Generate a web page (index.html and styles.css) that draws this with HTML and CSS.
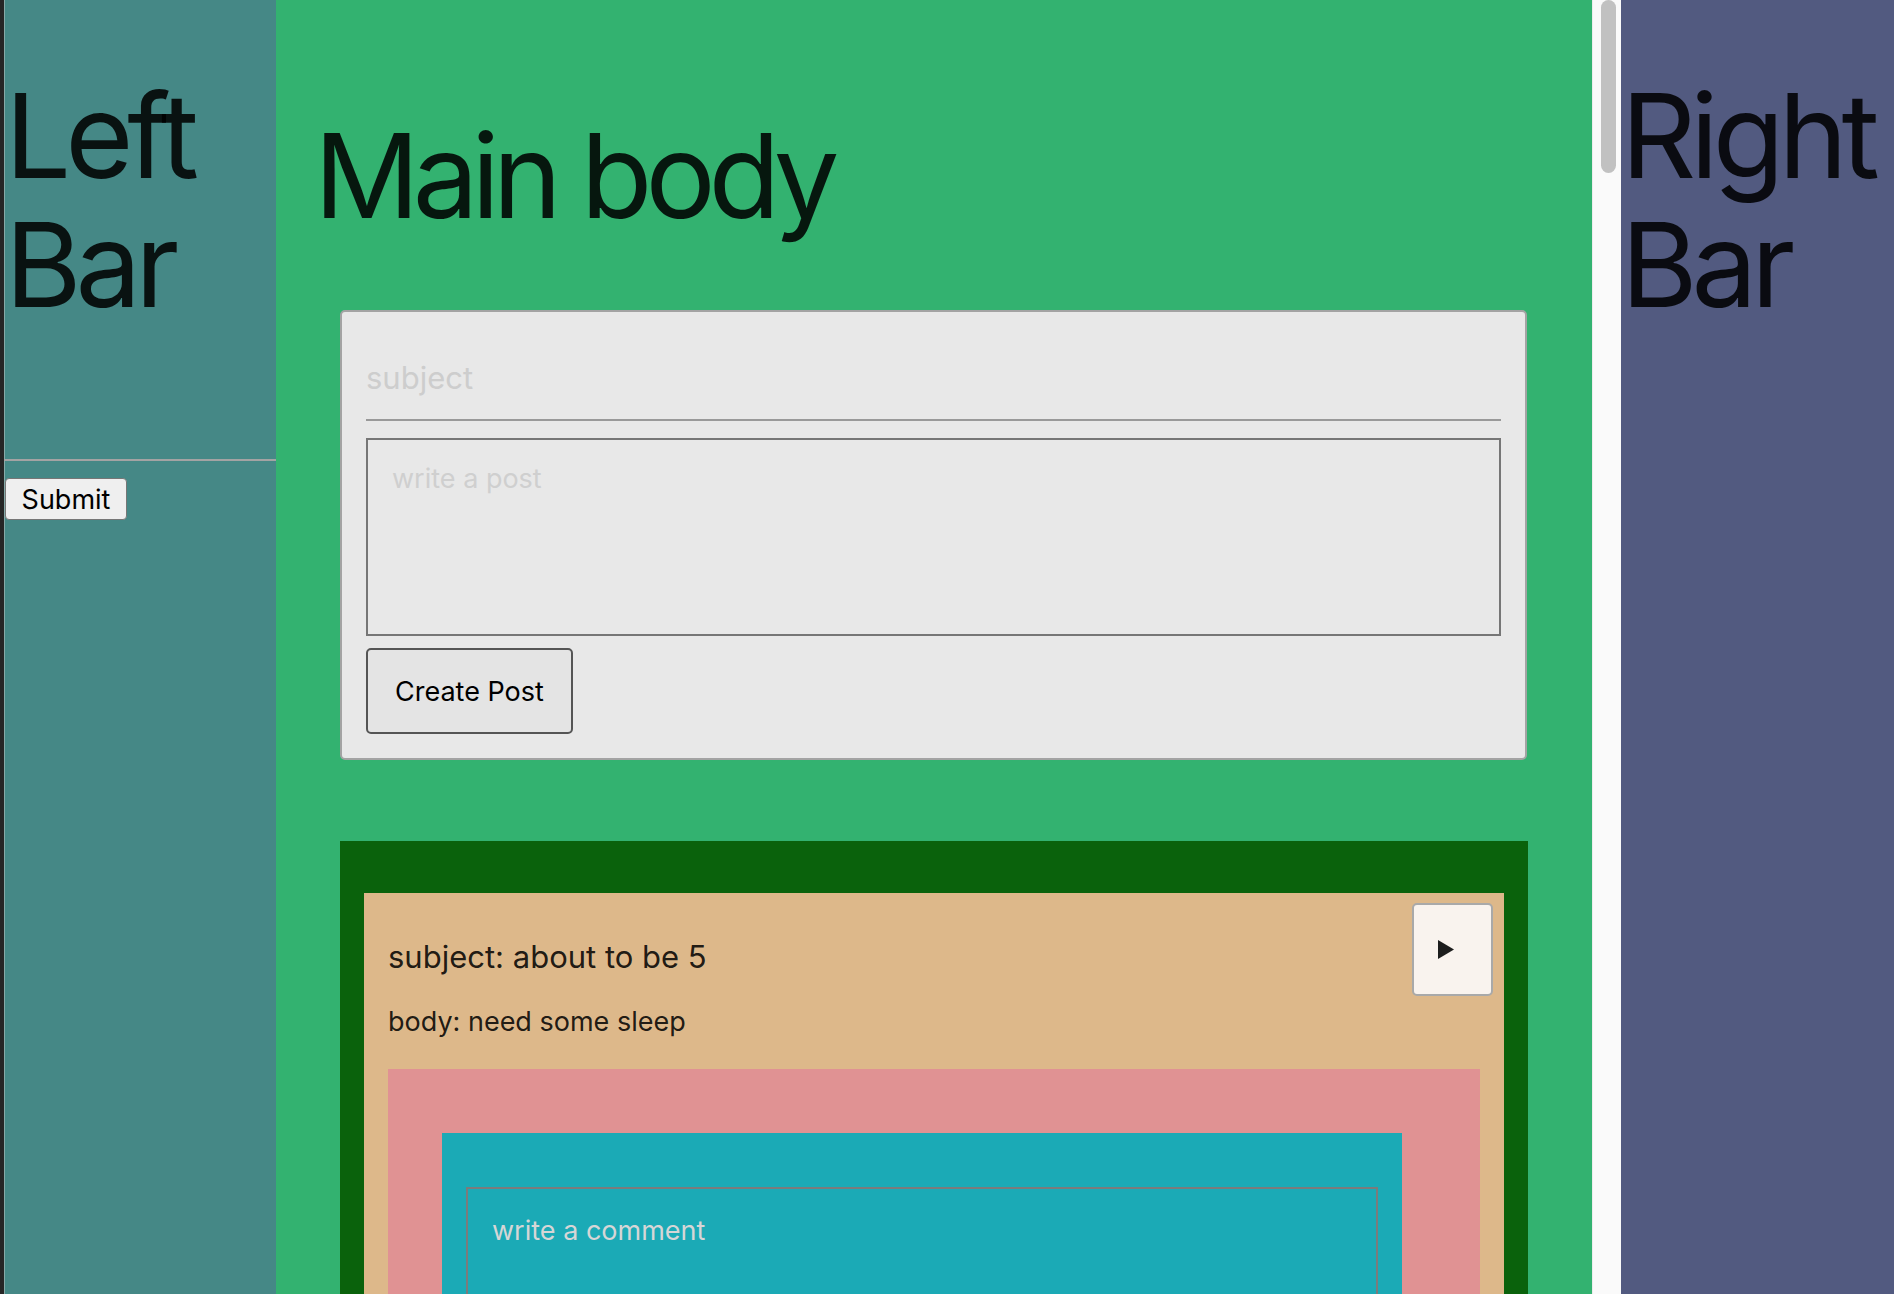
FILE: index.html
```html
<!DOCTYPE html>
<html lang="en">
<head>
<meta charset="utf-8">
<title>Posts</title>
<link rel="stylesheet" href="styles.css">
</head>
<body>
<div class="app">
  <aside class="sidebar sidebar-left">
    <h1 class="bar-title">Left Bar</h1>
    <form class="side-form">
      <hr class="side-rule">
      <button type="button" class="submit-btn">Submit</button>
    </form>
  </aside>

  <div class="main-shell">
    <main class="main">
      <h1 class="main-title">Main body</h1>

      <form class="post-form">
        <input class="subject-input" type="text" placeholder="subject">
        <textarea class="post-text" placeholder="write a post"></textarea>
        <button type="button" class="create-btn">Create Post</button>
      </form>

      <section class="feed">
        <article class="post-wrap">
          <div class="post">
            <button type="button" class="toggle-btn" aria-label="expand"><svg width="16" height="19" viewBox="0 0 16 19"><polygon points="0,0 16,9.5 0,19" fill="#1d1d1d"/></svg></button>
            <h3 class="post-subject">subject: about to be 5</h3>
            <p class="post-body">body: need some sleep</p>
            <div class="comments">
              <div class="comment-form">
                <textarea class="comment-text" placeholder="write a comment"></textarea>
              </div>
            </div>
          </div>
        </article>
      </section>
    </main>
    <div class="scrollbar"><div class="scroll-thumb"></div></div>
  </div>

  <aside class="sidebar sidebar-right">
    <h1 class="bar-title">Right Bar</h1>
  </aside>
</div>
</body>
</html>
```

FILE: styles.css
```css
* { box-sizing: border-box; }

html, body {
  margin: 0;
  height: 100%;
  overflow: hidden;
}

body {
  font-family: Inter, "Noto Sans", "Liberation Sans", sans-serif;
  color: rgba(0, 0, 0, 0.87);
}

.app {
  display: flex;
  height: 100vh;
}

.sidebar {
  flex: none;
  height: 100%;
}

.sidebar-left {
  width: 276px;
  background: #458886;
  border-left: 4px solid #262626;
  box-shadow: inset 1px 0 0 #86aaa8;
  padding-left: 1px;
}

.sidebar-right {
  width: 273px;
  background: #525a80;
}

.bar-title {
  margin: 71px 0 0;
  font-size: 117px;
  line-height: 129px;
  font-weight: 400;
  letter-spacing: -6px;
}

.side-form {
  margin-top: 130px;
}

.side-rule {
  margin: 0 0 0 -1px;
  border: 0;
  border-top: 2px solid #a3a3a3;
}

.submit-btn {
  margin-top: 17px;
  height: 42px;
  width: 122px;
  padding: 0;
  font-family: inherit;
  font-size: 27px;
  color: #000;
  background: #efefef;
  border: 1.5px solid #767676;
  border-radius: 4px;
}

.main-shell {
  flex: 1;
  display: flex;
  height: 100%;
  min-width: 0;
}

.main {
  flex: 1;
  min-width: 0;
  height: 100%;
  overflow: hidden;
  background: #33b270;
}

.scrollbar {
  flex: none;
  width: 29px;
  height: 100%;
  padding: 0 5px 0 8px;
  background: #fafafa;
  border-left: 1px solid #ececec;
}

.scroll-thumb {
  height: 173px;
  background: #c1c1c1;
  border-radius: 8px;
}

.main-title {
  margin: 111px 0 70px;
  padding-left: 38px;
  font-size: 117px;
  line-height: 129px;
  font-weight: 400;
  letter-spacing: -7px;
}

.post-form {
  margin: 0 65px 0 64px;
  padding: 24px;
  background: #e8e8e8;
  border: 2px solid #a3a3a3;
  border-radius: 5px;
}

.subject-input {
  display: block;
  width: 100%;
  height: 85px;
  padding: 0;
  border: 0;
  border-bottom: 2px solid #999;
  background: transparent;
  font-family: inherit;
  font-size: 31px;
  outline: none;
}

.subject-input::placeholder {
  color: #cdcdcd;
}

.post-text {
  display: block;
  width: 100%;
  height: 198px;
  margin-top: 17px;
  padding: 22px 24px;
  border: 2px solid #767676;
  background: transparent;
  font-family: inherit;
  font-size: 27px;
  resize: none;
}

.post-text::placeholder {
  color: #cfcfcf;
}

.create-btn {
  display: block;
  margin-top: 12px;
  height: 86px;
  padding: 0 27px;
  font-family: inherit;
  font-size: 27px;
  color: #000;
  background: #e4e4e4;
  border: 2px solid #555;
  border-radius: 5px;
}

.feed {
  margin-top: 81px;
  display: flex;
  flex-direction: column;
  gap: 64px;
}

.post-wrap {
  margin: 0 64px;
  padding: 52px 24px 24px;
  background: #0a620c;
}

.post {
  position: relative;
  padding: 45px 24px 24px;
  background: #ddb88a;
}

.toggle-btn {
  position: absolute;
  top: 10px;
  right: 11px;
  width: 81px;
  height: 93px;
  display: flex;
  align-items: center;
  justify-content: center;
  padding: 0 14px 0 0;
  background: #f9f3ee;
  border: 2px solid #a9a9a9;
  border-radius: 5px;
}

.post-subject {
  margin: 0 0 31px;
  font-size: 31px;
  line-height: 37px;
  font-weight: 400;
}

.post-body {
  margin: 0 0 31px;
  font-size: 27px;
  line-height: 32px;
}

.comments {
  padding: 64px 78px 24px 54px;
  background: #e09293;
}

.comment-form {
  padding: 54px 24px 24px;
  background: #1baab6;
}

.comment-text {
  display: block;
  width: 100%;
  height: 200px;
  padding: 25px 24px;
  border: 2px solid #7b7b7b;
  background: transparent;
  font-family: inherit;
  font-size: 27px;
  resize: none;
}

.comment-text::placeholder {
  color: #d6d6d6;
}
```
